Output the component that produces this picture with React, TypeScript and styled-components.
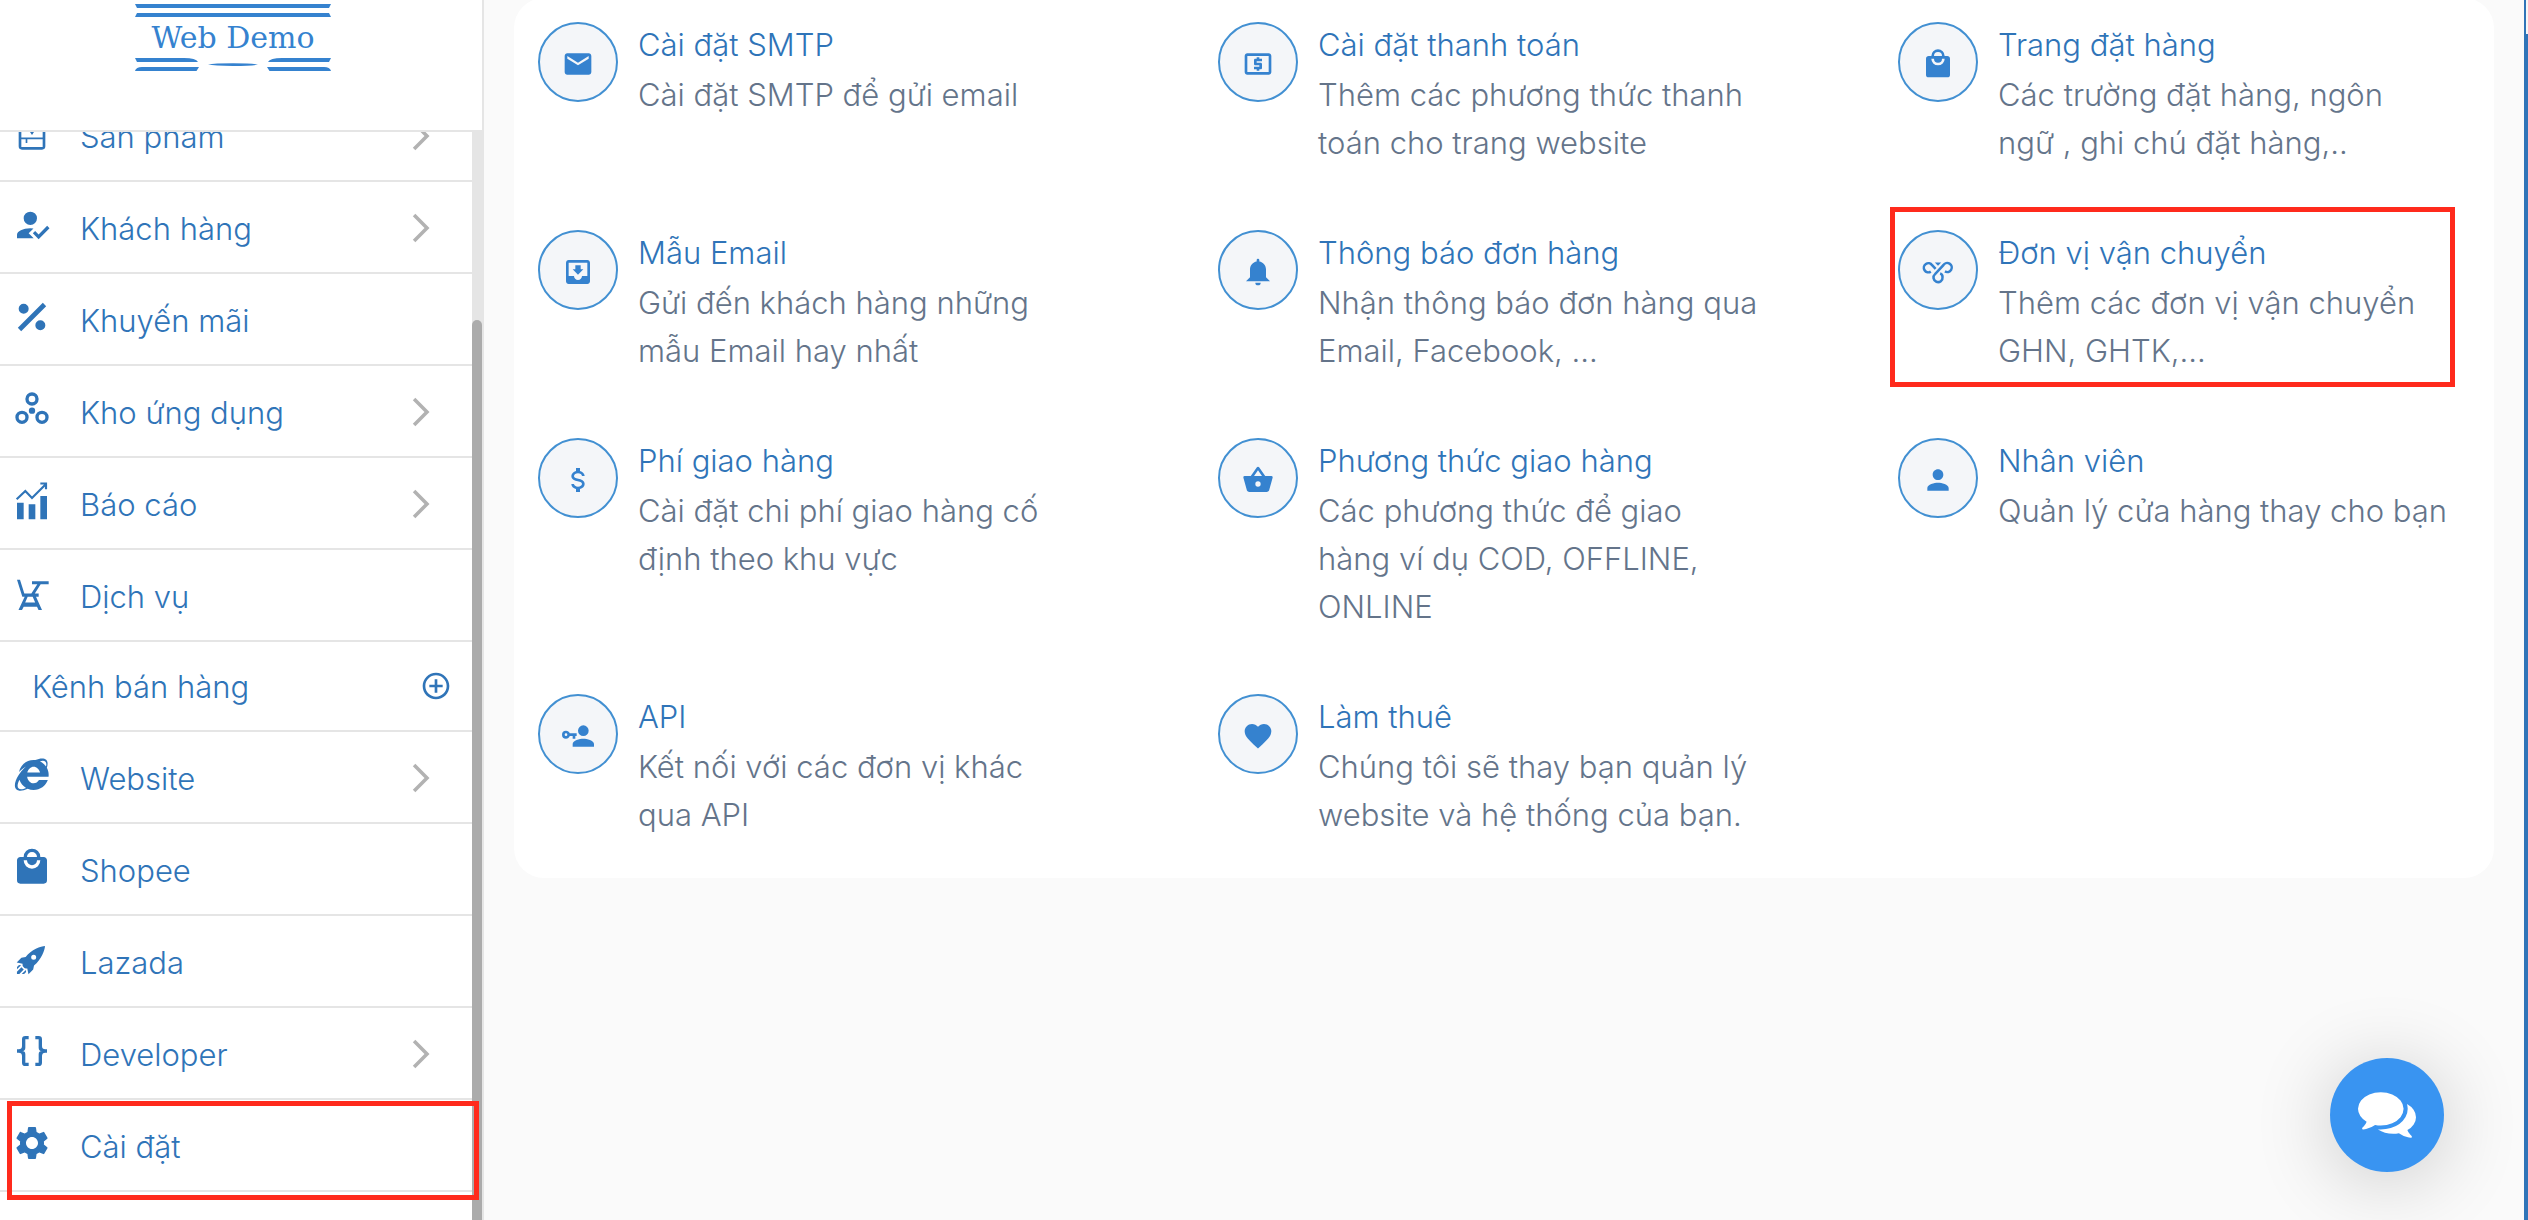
import React, { ReactNode } from 'react';
import styled, { createGlobalStyle, css } from 'styled-components';
import {
  MdAddCircleOutline,
  MdEmail,
  MdFavorite,
  MdLocalAtm,
  MdMoveToInbox,
  MdPerson,
  MdSettings,
} from 'react-icons/md';

const color = {
  link: '#2f74b8',
  accent: '#3582cf',
  ring: '#4290d2',
  muted: '#64748a',
  line: '#e5e5e5',
  page: '#fafafa',
  mark: '#ff2a1c',
};

const GlobalStyle = createGlobalStyle`
  *, *::before, *::after { box-sizing: border-box; }
  body {
    margin: 0;
    background: ${color.page};
    font-family: Inter, 'Liberation Sans', sans-serif;
    font-size: 31px;
    font-weight: 300;
  }
  a { color: inherit; text-decoration: none; }
  ul { margin: 0; padding: 0; list-style: none; }
`;

const Shell = styled.div`
  display: flex;
  height: 100vh;
  overflow: hidden;
`;

/* ---------- sidebar ---------- */

const Sidebar = styled.aside`
  flex: none;
  display: flex;
  flex-direction: column;
  width: 484px;
  background: #fff;
  border-right: 2px solid ${color.line};
  color: ${color.link};
`;

const Brand = styled.header`
  position: relative;
  z-index: 1;
  flex: none;
  display: flex;
  flex-direction: column;
  align-items: center;
  height: 132px;
  padding: 4px 16px 0 0;
  background: #fff;
  border-bottom: 2px solid ${color.line};
`;

const BrandName = styled.span`
  font-family: 'DejaVu Serif', serif;
  font-size: 30px;
  font-weight: 400;
  line-height: 40px;
  color: ${color.accent};
`;

const NavArea = styled.div`
  flex: 1;
  display: flex;
  min-height: 0;
`;

const Nav = styled.nav`
  flex: 1;
  margin-top: -42px;
`;

const ScrollTrack = styled.div`
  width: 10px;
  padding-top: 188px;
  background: ${color.line};
`;

const ScrollThumb = styled.div`
  height: 100%;
  border-radius: 5px 5px 0 0;
  background: #ababab;
`;

const marked = css`
  &::after {
    content: '';
    position: absolute;
    border: 5px solid ${color.mark};
    pointer-events: none;
  }
`;

const NavItem = styled.li<{ $marked?: boolean }>`
  position: relative;
  height: 92px;
  border-bottom: 2px solid ${color.line};
  ${(p) => p.$marked && marked}
  &::after { inset: 1px -7px -10px 7px; }
`;

const NavLink = styled.a`
  display: flex;
  align-items: center;
  gap: 28px;
  height: 100%;
  padding: 2px 34px 0 12px;
`;

const NavIcon = styled.span`
  display: flex;
  margin-bottom: 6px;
`;

const NavLabel = styled.span`
  flex: 1;
  padding-top: 2px;
  line-height: 48px;
`;

const NavSection = styled.li`
  display: flex;
  align-items: center;
  justify-content: space-between;
  height: 90px;
  padding: 0 20px 0 32px;
  border-bottom: 2px solid ${color.line};
`;

const AddButton = styled.button`
  display: flex;
  padding: 0;
  border: 0;
  background: none;
  color: inherit;
  font-size: 32px;
  cursor: pointer;
`;

/* ---------- content ---------- */

const Content = styled.main`
  flex: 1;
  min-width: 0;
  padding: 0 30px;
`;

const Card = styled.section`
  display: grid;
  grid-template-columns: repeat(3, minmax(0, 1fr));
  gap: 63px 120px;
  margin-top: -2px;
  padding: 24px 36px 39px 24px;
  border-radius: 30px;
  background: #fff;
`;

const Setting = styled.a<{ $marked?: boolean }>`
  position: relative;
  display: flex;
  align-items: flex-start;
  gap: 20px;
  ${(p) => p.$marked && marked}
  &::after { inset: -23px 3px -12px -8px; }
`;

const Round = styled.span`
  flex: none;
  display: flex;
  align-items: center;
  justify-content: center;
  width: 80px;
  height: 80px;
  padding-top: 4px;
  border: 2px solid ${color.ring};
  border-radius: 50%;
  background: #f4f6f9;
  color: ${color.accent};
  font-size: 32px;
`;

const SettingText = styled.span`
  flex: 1;
  min-width: 0;
`;

const SettingTitle = styled.span`
  display: block;
  margin-bottom: 3px;
  line-height: 46px;
  color: ${color.link};
`;

const SettingNote = styled.span`
  display: block;
  line-height: 48px;
  white-space: pre-line;
  color: ${color.muted};
`;

/* ---------- window edge and chat ---------- */

const Edge = styled.div`
  flex: none;
  width: 4px;
  padding-left: 2px;
  background: ${color.link};
`;

const EdgeGap = styled.div`
  height: 34px;
  background: #f6f6f6;
`;

const ChatButton = styled.button`
  position: fixed;
  right: 84px;
  bottom: 48px;
  display: flex;
  align-items: center;
  justify-content: center;
  width: 114px;
  height: 114px;
  padding: 0 0 4px;
  border: 0;
  border-radius: 50%;
  background: #3994f1;
  color: #fff;
  box-shadow: 0 8px 80px rgba(0, 0, 0, 0.2);
  cursor: pointer;
`;

/* ---------- drawings ---------- */

function Glyph({ size, d, children }: { size: number; d?: string; children?: ReactNode }) {
  return (
    <svg width={size} height={size} viewBox="0 0 24 24" fill="currentColor" aria-hidden="true">
      {d && <path d={d} />}
      {children}
    </svg>
  );
}

const shape = {
  customer:
    'M21.1,12.5L22.5,13.91L15.97,20.5L12.5,17L13.9,15.59L15.97,17.67L21.1,12.5M10,17L13,20H3V18C3,15.79 6.58,14 11,14L12.89,14.11L10,17M11,4A4,4 0 0,1 15,8A4,4 0 0,1 11,12A4,4 0 0,1 7,8A4,4 0 0,1 11,4Z',
  percent:
    'M18.5,3.5L20.5,5.5L5.5,20.5L3.5,18.5L18.5,3.5M7,4A3,3 0 0,1 10,7A3,3 0 0,1 7,10A3,3 0 0,1 4,7A3,3 0 0,1 7,4M17,14A3,3 0 0,1 20,17A3,3 0 0,1 17,20A3,3 0 0,1 14,17A3,3 0 0,1 17,14Z',
  explorer:
    'M13,3L14,3.06C16.8,1.79 19.23,1.64 20.5,2.92C21.5,3.93 21.58,5.67 20.92,7.72C21.61,9 22,10.45 22,12L21.95,13H9.08C9.45,15.28 11.06,17 13,17C14.31,17 15.47,16.21 16.2,15H21.5C20.25,18.5 16.92,21 13,21C11.72,21 10.5,20.73 9.41,20.25C6.5,21.68 3.89,21.9 2.57,20.56C1,18.96 1.68,15.57 4,12C4.93,10.54 6.14,9.06 7.57,7.65L8.38,6.88C7.21,7.57 5.71,8.62 4.19,10.17C5.03,6.08 8.66,3 13,3M13,7C11.21,7 9.69,8.47 9.18,10.5H16.82C16.31,8.47 14.79,7 13,7M20.06,4.06C19.4,3.39 18.22,3.35 16.74,3.81C18.22,4.5 19.5,5.56 20.41,6.89C20.73,5.65 20.64,4.65 20.06,4.06M3.89,20C4.72,20.84 6.4,20.69 8.44,19.76C6.59,18.67 5.17,16.94 4.47,14.88C3.27,17.15 3,19.07 3.89,20Z',
  bag:
    'M12,13A5,5 0 0,1 7,8H9A3,3 0 0,0 12,11A3,3 0 0,0 15,8H17A5,5 0 0,1 12,13M12,3A3,3 0 0,1 15,6H9A3,3 0 0,1 12,3M19,6H17A5,5 0 0,0 12,1A5,5 0 0,0 7,6H5C3.89,6 3,6.89 3,8V20A2,2 0 0,0 5,22H19A2,2 0 0,0 21,20V8C21,6.89 20.1,6 19,6Z',
  rocket:
    'M2.81,14.12L5.64,11.29L8.17,10.79C11.39,6.41 17.55,4.22 19.78,4.22C19.78,6.45 17.59,12.61 13.21,15.83L12.71,18.36L9.88,21.19L9.17,17.66C7.76,17.66 7.76,17.66 7.05,16.95C6.34,16.24 6.34,16.24 6.34,14.83L2.81,14.12M5.64,16.95L7.05,18.36L4.39,21.03H2.97V19.61L5.64,16.95M4.22,15.54L5.46,15.71L3,18.16V16.74L4.22,15.54M8.29,18.54L8.46,19.78L7.26,21H5.84L8.29,18.54M13,9.5A1.5,1.5 0 0,0 11.5,11A1.5,1.5 0 0,0 13,12.5A1.5,1.5 0 0,0 14.5,11A1.5,1.5 0 0,0 13,9.5Z',
  braces:
    'M8,3A2,2 0 0,0 6,5V9A2,2 0 0,1 4,11H3V13H4A2,2 0 0,1 6,15V19A2,2 0 0,0 8,21H10V19H8V14A2,2 0 0,0 6,12A2,2 0 0,0 8,10V5H10V3M16,3A2,2 0 0,1 18,5V9A2,2 0 0,0 20,11H21V13H20A2,2 0 0,0 18,15V19A2,2 0 0,1 16,21H14V19H16V14A2,2 0 0,1 18,12A2,2 0 0,1 16,10V5H14V3H16Z',
  chevron: 'M6.23 20.23L8 22l10-10L8 2 6.23 3.77 14.46 12z',
  bell:
    'M14,20A2,2 0 0,1 12,22A2,2 0 0,1 10,20H14M12,2A1,1 0 0,1 13,3V4.08C15.84,4.56 18,7.03 18,10V16L21,19H3L6,16V10C6,7.03 8.16,4.56 11,4.08V3A1,1 0 0,1 12,2Z',
  basket:
    'M5.5,21C4.72,21 4.04,20.55 3.71,19.9V19.9L1.1,10.44L1,10A1,1 0 0,1 2,9H6.58L11.18,2.43C11.36,2.17 11.66,2 12,2C12.34,2 12.65,2.17 12.83,2.44L17.42,9H22A1,1 0 0,1 23,10L22.96,10.29L20.29,19.9C19.96,20.55 19.28,21 18.5,21H5.5M12,4.74L9,9H15L12,4.74M12,13A2,2 0 0,0 10,15A2,2 0 0,0 12,17A2,2 0 0,0 14,15A2,2 0 0,0 12,13Z',
  dollar:
    'M7,15H9C9,16.08 10.37,17 12,17C13.63,17 15,16.08 15,15C15,13.9 13.96,13.5 11.76,12.97C9.64,12.44 7,11.78 7,9C7,7.21 8.47,5.69 10.5,5.18V3H13.5V5.18C15.53,5.69 17,7.21 17,9H15C15,7.92 13.63,7 12,7C10.37,7 9,7.92 9,9C9,10.1 10.04,10.5 12.24,11.03C14.36,11.56 17,12.22 17,15C17,16.79 15.53,18.31 13.5,18.82V21H10.5V18.82C8.47,18.31 7,16.79 7,15Z',
  accountKey:
    'M11,10V12H10V14H8V12H5.83C5.42,13.17 4.31,14 3,14A3,3 0 0,1 0,11A3,3 0 0,1 3,8C4.31,8 5.42,8.83 5.83,10H11M3,10A1,1 0 0,0 2,11A1,1 0 0,0 3,12A1,1 0 0,0 4,11A1,1 0 0,0 3,10M16,14C18.67,14 24,15.34 24,18V20H8V18C8,15.34 13.33,14 16,14M16,12A4,4 0 0,1 12,8A4,4 0 0,1 16,4A4,4 0 0,1 20,8A4,4 0 0,1 16,12Z',
};

const ProductIcon = () => (
  <Glyph size={40}>
    <path
      fillRule="evenodd"
      d="M6,2H18A2,2 0 0,1 20,4V20A2,2 0 0,1 18,22H6A2,2 0 0,1 4,20V4A2,2 0 0,1 6,2M5.6,4V14.7H18.4V4H5.6M5.6,15.8V20.4H18.4V15.8H9.2V18H8.2V15.8H5.6Z"
    />
    <path d="M9.5,9.5L12,13.2L14.5,9.5Z" />
  </Glyph>
);

const AppsIcon = () => (
  <Glyph size={40}>
    <g fill="none" stroke="currentColor" strokeWidth="2">
      <circle cx="12" cy="6" r="3" />
      <circle cx="6" cy="17" r="3" />
      <circle cx="18" cy="17" r="3" />
    </g>
    <circle cx="12" cy="13" r="1.9" />
  </Glyph>
);

const ReportIcon = () => (
  <svg width={40} height={40} viewBox="0 0 24 24" overflow="visible" aria-hidden="true">
    <path fill="currentColor" d="M3,13H7V23H3ZM10,14H14V23H10ZM17,9H21V23H17Z" />
    <path fill="none" stroke="currentColor" strokeWidth="1.3" d="M2.8,11L8,6L12,10.2L20.4,1.8M17,1.5H20.4V5" />
  </svg>
);

const ServiceIcon = () => (
  <Glyph size={40}>
    <path d="M3,4H4.8L7.4,12.3H11.6L15.2,6.8H12V5H22V6.8H17.2L13.7,12.3H16V14.2H14.4L18,22.2H15.9L15,20.2H7L6,22.2H3.9L7.6,14.2H6.2ZM9.4,14.2L7.9,17.7H13.9L12.4,14.2Z" fillRule="evenodd" />
  </Glyph>
);

const ShippingIcon = () => (
  <Glyph size={32}>
    <g fill="none" stroke="currentColor" strokeWidth="1.9">
      <path d="M6.6,11.7A3.4,3.4 0 1 1 7.6,6.9L10.2,9.6" />
      <path d="M17.2,11.6A3.4,3.4 0 1 0 16,6.9L9.8,13.6A3.4,3.4 0 1 0 15.4,15.8C15.4,14.4 14.6,13.4 13.6,13.1" />
    </g>
    <path d="M9.6,4.9H14.4L12,7.4Z" />
  </Glyph>
);

const ChatIcon = () => (
  <svg width="58" height="58" viewBox="0 0 1792 1792" fill="currentColor" aria-hidden="true">
    <path d="M1408 768q0 139-94 257t-256.5 186.5-353.5 68.5q-86 0-176-16-124 88-278 128-36 9-86 16h-3q-11 0-20.5-8t-11.5-21q-1-3-1-6.5t.5-6.5 2-6l2.5-5 3.5-5.5 4-5 4.5-5 4-4.5q5-6 23-25t26-29.5 22.5-29 25-38.5 20.5-44q-124-72-195-177t-71-224q0-139 94-257t256.5-186.5 353.5-68.5 353.5 68.5 256.5 186.5 94 257zm384 256q0 120-71 224.5t-195 176.5q10 24 20.5 44t25 38.5 22.5 29 26 29.5 23 25q1 1 4 4.5t4.5 5 4 5 3.5 5.5l2.5 5 2 6 .5 6.5-1 6.5q-3 14-13 22t-22 7q-50-7-86-16-154-40-278-128-90 16-176 16-271 0-472-132 58 4 88 4 161 0 309-45t264-129q125-92 192-212t67-254q0-77-23-152 129 71 204 178t75 230z" />
  </svg>
);

const BrandTop = () => (
  <svg width="198" height="14" viewBox="0 0 198 14" fill={color.accent} aria-hidden="true">
    <path d="M1,0H197L195,4H3ZM3,9H195L197,13H1Z" />
  </svg>
);

const BrandBottom = () => (
  <svg width="198" height="14" viewBox="0 0 198 14" fill={color.accent} aria-hidden="true">
    <path d="M1,0H50Q62,0 64,4H3ZM197,0H148Q136,0 134,4H195ZM65,9H8Q2,9 1,13H62.5ZM133,9H190Q196,9 197,13H135.5ZM74,6.6Q80,5.2 99,5.2Q118,5.2 124,6.6Q118,8 99,8Q80,8 74,6.6Z" />
  </svg>
);

/* ---------- data ---------- */

type Entry = { label: string; icon: ReactNode; more?: boolean; marked?: boolean };

const shopMenu: Entry[] = [
  { label: 'Sản phẩm', icon: <ProductIcon />, more: true },
  { label: 'Khách hàng', icon: <Glyph size={40} d={shape.customer} />, more: true },
  { label: 'Khuyến mãi', icon: <Glyph size={40} d={shape.percent} /> },
  { label: 'Kho ứng dụng', icon: <AppsIcon />, more: true },
  { label: 'Báo cáo', icon: <ReportIcon />, more: true },
  { label: 'Dịch vụ', icon: <ServiceIcon /> },
];

const channelMenu: Entry[] = [
  { label: 'Website', icon: <Glyph size={40} d={shape.explorer} />, more: true },
  { label: 'Shopee', icon: <Glyph size={40} d={shape.bag} /> },
  { label: 'Lazada', icon: <Glyph size={40} d={shape.rocket} /> },
  { label: 'Developer', icon: <Glyph size={40} d={shape.braces} />, more: true },
  { label: 'Cài đặt', icon: <MdSettings size={40} />, marked: true },
];

const settings: { title: string; note: string; icon: ReactNode; marked?: boolean }[] = [
  { title: 'Cài đặt SMTP', note: 'Cài đặt SMTP để gửi email', icon: <MdEmail /> },
  { title: 'Cài đặt thanh toán', note: 'Thêm các phương thức thanh\ntoán cho trang website', icon: <MdLocalAtm /> },
  { title: 'Trang đặt hàng', note: 'Các trường đặt hàng, ngôn\nngữ , ghi chú đặt hàng,..', icon: <Glyph size={32} d={shape.bag} /> },
  { title: 'Mẫu Email', note: 'Gửi đến khách hàng những\nmẫu Email hay nhất', icon: <MdMoveToInbox /> },
  { title: 'Thông báo đơn hàng', note: 'Nhận thông báo đơn hàng qua\nEmail, Facebook, ...', icon: <Glyph size={32} d={shape.bell} /> },
  { title: 'Đơn vị vận chuyển', note: 'Thêm các đơn vị vận chuyển\nGHN, GHTK,...', icon: <ShippingIcon />, marked: true },
  { title: 'Phí giao hàng', note: 'Cài đặt chi phí giao hàng cố\nđịnh theo khu vực', icon: <Glyph size={32} d={shape.dollar} /> },
  { title: 'Phương thức giao hàng', note: 'Các phương thức để giao\nhàng ví dụ COD, OFFLINE,\nONLINE', icon: <Glyph size={32} d={shape.basket} /> },
  { title: 'Nhân viên', note: 'Quản lý cửa hàng thay cho bạn', icon: <MdPerson /> },
  { title: 'API', note: 'Kết nối với các đơn vị khác\nqua API', icon: <Glyph size={32} d={shape.accountKey} /> },
  { title: 'Làm thuê', note: 'Chúng tôi sẽ thay bạn quản lý\nwebsite và hệ thống của bạn.', icon: <MdFavorite /> },
];

const Chevron = styled.span`
  display: flex;
  color: #b2b2b2;
`;

function MenuRow({ entry }: { entry: Entry }) {
  return (
    <NavItem $marked={entry.marked}>
      <NavLink href="#">
        <NavIcon>{entry.icon}</NavIcon>
        <NavLabel>{entry.label}</NavLabel>
        {entry.more && (
          <Chevron>
            <Glyph size={34} d={shape.chevron} />
          </Chevron>
        )}
      </NavLink>
    </NavItem>
  );
}

export default function App() {
  return (
    <>
      <GlobalStyle />
      <Shell>
        <Sidebar>
          <Brand>
            <BrandTop />
            <BrandName>Web Demo</BrandName>
            <BrandBottom />
          </Brand>
          <NavArea>
            <Nav>
              <ul>
                {shopMenu.map((entry) => (
                  <MenuRow key={entry.label} entry={entry} />
                ))}
                <NavSection>
                  <span>Kênh bán hàng</span>
                  <AddButton type="button" aria-label="Thêm kênh bán hàng">
                    <MdAddCircleOutline />
                  </AddButton>
                </NavSection>
                {channelMenu.map((entry) => (
                  <MenuRow key={entry.label} entry={entry} />
                ))}
              </ul>
            </Nav>
            <ScrollTrack>
              <ScrollThumb />
            </ScrollTrack>
          </NavArea>
        </Sidebar>
        <Content>
          <Card>
            {settings.map((item) => (
              <Setting key={item.title} href="#" $marked={item.marked}>
                <Round>{item.icon}</Round>
                <SettingText>
                  <SettingTitle>{item.title}</SettingTitle>
                  <SettingNote>{item.note}</SettingNote>
                </SettingText>
              </Setting>
            ))}
          </Card>
        </Content>
        <Edge>
          <EdgeGap />
        </Edge>
      </Shell>
      <ChatButton type="button" aria-label="Chat">
        <ChatIcon />
      </ChatButton>
    </>
  );
}
